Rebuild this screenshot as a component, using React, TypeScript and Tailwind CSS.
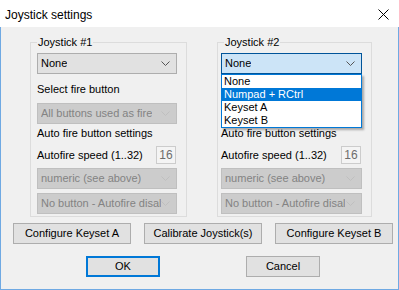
import React from "react";

const Chevron = ({ color = "#333" }: { color?: string }) => (
  <svg width="9" height="5" viewBox="0 0 9 5" className="shrink-0">
    <polyline points="0.5,0.5 4.5,4.5 8.5,0.5" fill="none" stroke={color} strokeWidth="1" />
  </svg>
);

function Combo({
  text,
  variant = "normal",
  w = "w-[140px]",
}: {
  text: string;
  variant?: "normal" | "disabled" | "open";
  w?: string;
}) {
  const cls =
    variant === "disabled"
      ? "bg-[#cccccc] border-[#bfbfbf] text-[#838383]"
      : variant === "open"
      ? "bg-[#cce4f7] border-[#005499] text-black"
      : "bg-[#e1e1e1] border-[#adadad] text-black";
  return (
    <div className={`${w} h-[21px] border ${cls} flex items-center justify-between pl-[3px] pr-[6px] overflow-hidden`}>
      <span className="whitespace-nowrap overflow-hidden">{text}</span>
      <Chevron color={variant === "disabled" ? "#bfbfbf" : "#555"} />
    </div>
  );
}

function Group({
  title,
  w,
  pl,
  children,
}: {
  title: string;
  w: string;
  pl: string;
  children?: React.ReactNode;
}) {
  return (
    <div className={`relative ${w} border border-[#dcdcdc] ${pl} pt-[10px] pb-[2px] flex flex-col`}>
      <span className="absolute -top-[7px] left-[6px] bg-[#f0f0f0] px-[1px] leading-[13px]">{title}</span>
      {children}
    </div>
  );
}

function GroupContent({
  first,
  firstVariant,
  speedMr,
  comboW,
  covered = false,
}: {
  first: string;
  firstVariant: "normal" | "open";
  speedMr: string;
  comboW: string;
  covered?: boolean;
}) {
  const hid = covered ? "invisible" : "";
  return (
    <>
      <Combo text={first} variant={firstVariant} w={comboW} />
      <div className={`mt-[9px] h-[13px] leading-[13px] ${hid}`}>Select fire button</div>
      <div className={`mt-[7px] ${hid}`}>
        <Combo text="All buttons used as fire" variant="disabled" w={comboW} />
      </div>
      <div className="mt-[3px] h-[13px] leading-[13px]">Auto fire button settings</div>
      <div className={`mt-[6px] h-[18px] flex items-center justify-between ${speedMr}`}>
        <span className="leading-[13px]">Autofire speed (1..32)</span>
        <div className="w-[20px] h-[18px] border border-[#cccccc] bg-[#f4f4f4] text-[#6d6d6d] flex items-center justify-center text-[12px]">
          16
        </div>
      </div>
      <div className="mt-[4px]">
        <Combo text="numeric (see above)" variant="disabled" w={comboW} />
      </div>
      <div className="mt-[4px]">
        <Combo text="No button - Autofire disal" variant="disabled" w={comboW} />
      </div>
    </>
  );
}

function Btn({ children, w = "w-[118px]", focus = false }: { children: React.ReactNode; w?: string; focus?: boolean }) {
  return (
    <div
      className={`${w} h-[21px] flex items-center justify-center bg-[#e1e1e1] ${
        focus ? "border-2 border-[#0078d7]" : "border border-[#adadad]"
      }`}
    >
      {children}
    </div>
  );
}

export default function App() {
  return (
    <div
      className="w-[399px] h-[290px] bg-white flex flex-col text-[11px] text-black"
      style={{ fontFamily: '"Liberation Sans", Arial, sans-serif' }}
    >
      <div className="h-[27px] shrink-0 flex items-start justify-between pl-[5px] pr-[10px] pt-[8px]">
        <span className="text-[12px] leading-[14px]">Joystick settings</span>
        <svg width="11" height="11" viewBox="0 0 11 11" className="mt-[1px]">
          <line x1="0.5" y1="0.5" x2="10.5" y2="10.5" stroke="#000" strokeWidth="1" />
          <line x1="10.5" y1="0.5" x2="0.5" y2="10.5" stroke="#000" strokeWidth="1" />
        </svg>
      </div>
      <div className="flex-1 bg-[#f0f0f0] border-l border-r border-b border-[#6fa9e3] flex flex-col">
        <div className="flex pl-[29px] mt-[15px] gap-[30px]">
          <Group title="Joystick #1" w="w-[157px]" pl="pl-[6px]">
            <GroupContent first="None" firstVariant="normal" speedMr="mr-[10px]" comboW="w-[140px]" />
          </Group>
          <div className="relative">
            <Group title="Joystick #2" w="w-[155px]" pl="pl-[3px]">
              <GroupContent first="None" firstVariant="open" speedMr="mr-[10px]" comboW="w-[141px]" covered />
            </Group>
            <div className="absolute left-[4px] top-[32px] w-[141px] bg-white border border-[#0078d7] shadow-[2px_2px_2px_rgba(0,0,0,0.3)] flex flex-col z-10">
              <div className="h-[13px] leading-[13px] pl-[2px]">None</div>
              <div className="h-[13px] leading-[13px] pl-[2px] bg-[#0078d7] text-white">Numpad + RCtrl</div>
              <div className="h-[13px] leading-[13px] pl-[2px]">Keyset A</div>
              <div className="h-[13px] leading-[13px] pl-[2px]">Keyset B</div>
            </div>
          </div>
        </div>
        <div className="flex pl-[12px] gap-[13px] mt-[6px]">
          <Btn>Configure Keyset A</Btn>
          <Btn>Calibrate Joystick(s)</Btn>
          <Btn>Configure Keyset B</Btn>
        </div>
        <div className="flex pl-[85px] gap-[86px] mt-[12px]">
          <Btn w="w-[74px]" focus>
            OK
          </Btn>
          <Btn w="w-[74px]">Cancel</Btn>
        </div>
      </div>
    </div>
  );
}
